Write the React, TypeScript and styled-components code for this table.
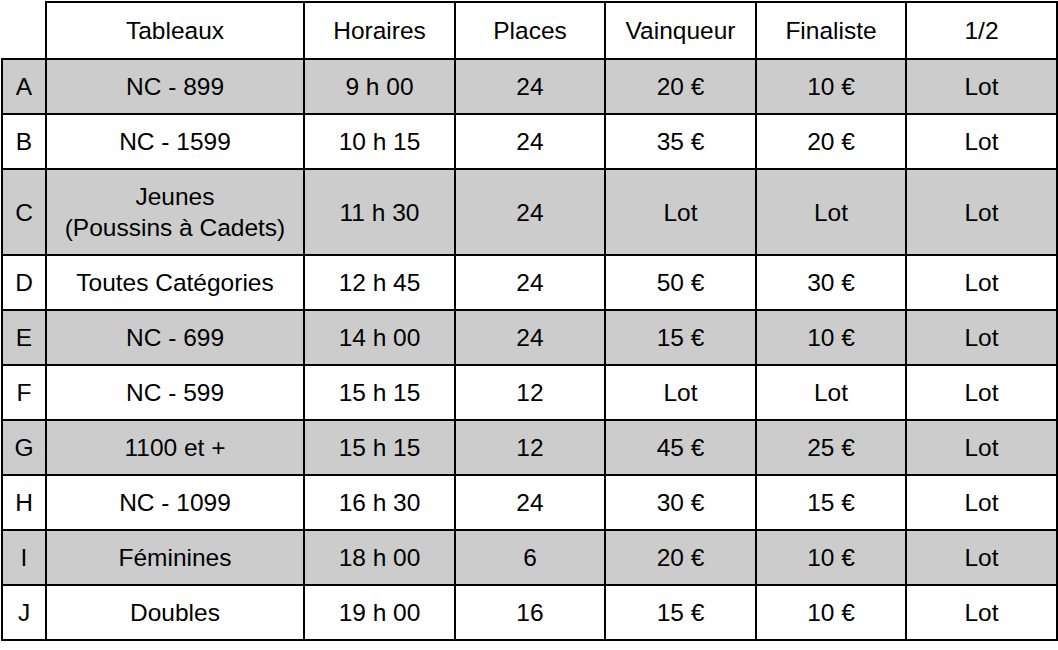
import styled, { createGlobalStyle } from 'styled-components';

const GlobalStyle = createGlobalStyle`
  body {
    margin: 0;
    background: #ffffff;
    font-family: 'Liberation Sans', Arial, sans-serif;
  }
`;

const Table = styled.table`
  border-collapse: collapse;
  table-layout: fixed;
  width: 1056px;
  margin: 1px 0 0 1px;
  color: #000000;
  font-size: 24.5px;
`;

const HeadCell = styled.th<{ $blank?: boolean }>`
  font-weight: 400;
  height: 55px;
  padding: 0;
  text-align: center;
  vertical-align: middle;
  border: 2px solid #000000;
  ${({ $blank }) =>
    $blank &&
    `
    border-top: none;
    border-left: none;
  `}
`;

const Row = styled.tr<{ $shaded: boolean }>`
  background: ${({ $shaded }) => ($shaded ? '#cccccc' : '#ffffff')};
`;

const Cell = styled.td`
  height: 53.7px;
  padding: 11px 4px;
  box-sizing: border-box;
  text-align: center;
  vertical-align: middle;
  line-height: 31px;
  border: 2px solid #000000;
`;

const LetterCell = styled(Cell)`
  padding: 11px 0;
`;

type Entry = {
  letter: string;
  name: string[];
  time: string;
  places: number;
  winner: string;
  finalist: string;
  semi: string;
};

const entries: Entry[] = [
  { letter: 'A', name: ['NC - 899'], time: '9 h 00', places: 24, winner: '20 €', finalist: '10 €', semi: 'Lot' },
  { letter: 'B', name: ['NC - 1599'], time: '10 h 15', places: 24, winner: '35 €', finalist: '20 €', semi: 'Lot' },
  { letter: 'C', name: ['Jeunes', '(Poussins à Cadets)'], time: '11 h 30', places: 24, winner: 'Lot', finalist: 'Lot', semi: 'Lot' },
  { letter: 'D', name: ['Toutes Catégories'], time: '12 h 45', places: 24, winner: '50 €', finalist: '30 €', semi: 'Lot' },
  { letter: 'E', name: ['NC - 699'], time: '14 h 00', places: 24, winner: '15 €', finalist: '10 €', semi: 'Lot' },
  { letter: 'F', name: ['NC - 599'], time: '15 h 15', places: 12, winner: 'Lot', finalist: 'Lot', semi: 'Lot' },
  { letter: 'G', name: ['1100 et +'], time: '15 h 15', places: 12, winner: '45 €', finalist: '25 €', semi: 'Lot' },
  { letter: 'H', name: ['NC - 1099'], time: '16 h 30', places: 24, winner: '30 €', finalist: '15 €', semi: 'Lot' },
  { letter: 'I', name: ['Féminines'], time: '18 h 00', places: 6, winner: '20 €', finalist: '10 €', semi: 'Lot' },
  { letter: 'J', name: ['Doubles'], time: '19 h 00', places: 16, winner: '15 €', finalist: '10 €', semi: 'Lot' },
];

const widths = [44, 258, 151, 150, 151, 150, 151];

function App() {
  return (
    <>
      <GlobalStyle />
      <Table>
        <colgroup>
          {widths.map((w, i) => (
            <col key={i} style={{ width: w }} />
          ))}
        </colgroup>
        <thead>
          <tr>
            <HeadCell $blank />
            <HeadCell>Tableaux</HeadCell>
            <HeadCell>Horaires</HeadCell>
            <HeadCell>Places</HeadCell>
            <HeadCell>Vainqueur</HeadCell>
            <HeadCell>Finaliste</HeadCell>
            <HeadCell>1/2</HeadCell>
          </tr>
        </thead>
        <tbody>
          {entries.map((e, i) => (
            <Row key={e.letter} $shaded={i % 2 === 0}>
              <LetterCell>{e.letter}</LetterCell>
              <Cell>
                {e.name.map((line, j) => (
                  <div key={j}>{line}</div>
                ))}
              </Cell>
              <Cell>{e.time}</Cell>
              <Cell>{e.places}</Cell>
              <Cell>{e.winner}</Cell>
              <Cell>{e.finalist}</Cell>
              <Cell>{e.semi}</Cell>
            </Row>
          ))}
        </tbody>
      </Table>
    </>
  );
}

export default App;
